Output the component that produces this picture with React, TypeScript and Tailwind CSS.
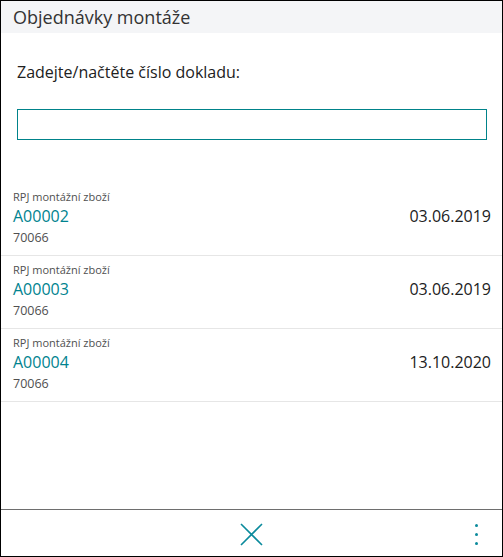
const orders = [
  { label: "RPJ montážní zboží", code: "A00002", num: "70066", date: "03.06.2019" },
  { label: "RPJ montážní zboží", code: "A00003", num: "70066", date: "03.06.2019" },
  { label: "RPJ montážní zboží", code: "A00004", num: "70066", date: "13.10.2020" },
]

export default function App() {
  return (
    <div
      className="w-[503px] h-[557px] border border-black bg-white flex flex-col text-[#212121]"
      style={{ fontFamily: '"Segoe UI", "Open Sans", "Noto Sans", sans-serif' }}
    >
      {/* header */}
      <div className="h-[32px] shrink-0 bg-[#f4f5f7] pl-3 flex items-center">
        <h1 className="text-[18px] text-[#333] leading-none">Objednávky montáže</h1>
      </div>

      {/* content */}
      <div className="flex-1 flex flex-col">
        <div className="px-4 pt-[28px]">
          <p className="text-[16px] leading-[22px] text-[#212121]">Zadejte/načtěte číslo dokladu:</p>
          <input
            className="mt-[26px] w-[470px] h-[31px] border border-[#00838a] outline-none px-2 text-[15px]"
            type="text"
          />
        </div>

        <div className="mt-[43px]">
          {orders.map((o) => (
            <div key={o.code} className="pl-3 pr-[11px] pt-[7px] pb-[8px] border-b border-[#e6e6e6]">
              <p className="text-[11px] leading-[14px] text-[#505050]">{o.label}</p>
              <div className="flex items-center justify-between h-[24px]">
                <span className="text-[16px] text-[#00838f]">{o.code}</span>
                <span className="text-[16px] text-[#212121]">{o.date}</span>
              </div>
              <p className="text-[12.5px] leading-[18px] pt-[1px] text-[#505050]">{o.num}</p>
            </div>
          ))}
        </div>
      </div>

      {/* footer */}
      <div className="h-[47px] shrink-0 border-t border-[#6e6e6e] relative flex items-center justify-center pt-[3px]">
        <svg width="23" height="23" viewBox="0 0 23 23" className="text-[#0a8a9c]">
          <path d="M1 1 L22 22 M22 1 L1 22" stroke="currentColor" strokeWidth="1.6" fill="none" />
        </svg>
        <div className="absolute right-[24px] top-[14px] flex flex-col gap-[6px]">
          <span className="w-[3px] h-[3px] rounded-full bg-[#0a8a9c]" />
          <span className="w-[3px] h-[3px] rounded-full bg-[#0a8a9c]" />
          <span className="w-[3px] h-[3px] rounded-full bg-[#0a8a9c]" />
        </div>
      </div>
    </div>
  )
}
